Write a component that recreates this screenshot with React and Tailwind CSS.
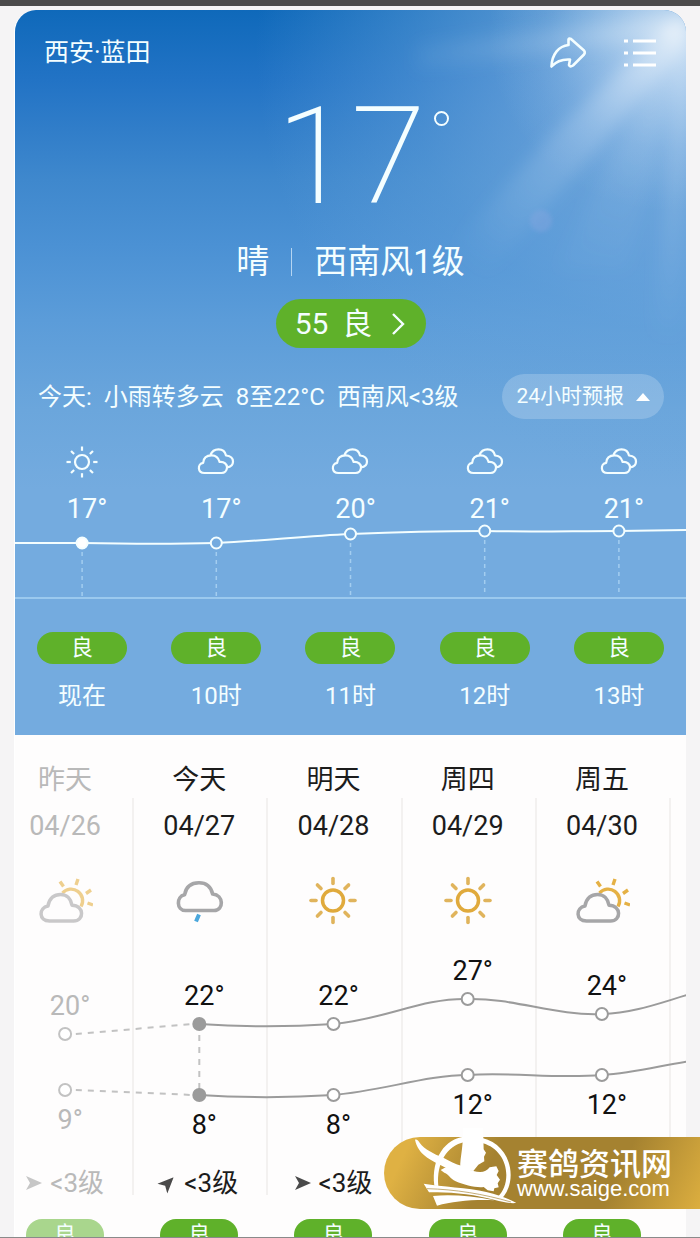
import React, { useState } from "react";

const hours = [
  { time: "现在", temp: 17, icon: "sunny", air: "良", y: 18 },
  { time: "10时", temp: 17, icon: "cloudy", air: "良", y: 18 },
  { time: "11时", temp: 20, icon: "cloudy", air: "良", y: 9 },
  { time: "12时", temp: 21, icon: "cloudy", air: "良", y: 6 },
  { time: "13时", temp: 21, icon: "cloudy", air: "良", y: 6 },
];

const days = [
  { name: "昨天", date: "04/26", icon: "partly", high: 20, low: 9, hy: 94, ly: 150, wind: "<3级", angle: 0, past: true },
  { name: "今天", date: "04/27", icon: "rain", high: 22, low: 8, hy: 84, ly: 155, wind: "<3级", angle: -45, today: true },
  { name: "明天", date: "04/28", icon: "sunny", high: 22, low: 8, hy: 84, ly: 155, wind: "<3级", angle: 0 },
  { name: "周四", date: "04/29", icon: "sunny", high: 27, low: 12, hy: 59, ly: 135 },
  { name: "周五", date: "04/30", icon: "partly", high: 24, low: 12, hy: 74, ly: 135 },
];

const rays = [0, 45, 90, 135, 180, 225, 270, 315];

const HourIcon = ({ name }) => {
  if (name === "sunny") {
    return (
      <svg className="h-8 w-10" viewBox="0 0 40 32" fill="none" stroke="#f4feff" strokeWidth="2.2">
        <circle cx="20" cy="16" r="7" />
        {rays.map((a) => (
          <path key={a} d="M20 4.8V0.5" transform={`rotate(${a} 20 16)`} />
        ))}
      </svg>
    );
  }
  return (
    <svg className="h-8 w-10" viewBox="0 0 40 32" fill="none" stroke="#f4feff" strokeWidth="2.2" strokeLinejoin="round">
      <path d="M8.5 27C1.5 27 1 17.8 7.2 16.8C7.5 11.5 11 9.3 15.6 9.3C20 9.3 22.6 12 23.6 16C28.5 15.5 31 18.5 31 21.3C31 24.8 28.5 27 25.5 27Z" />
      <path d="M14.5 9C16 5 19 3.3 22.5 3.3C27 3.3 29.3 6 30 9.5C34.5 10 37 12.3 37 15.5C37 19 34.8 21 31 21.3" />
    </svg>
  );
};

const DayIcon = ({ name }) => {
  if (name === "sunny") {
    return (
      <svg className="h-14 w-14" viewBox="0 0 56 56" fill="none" stroke="#e0aa3c">
        <circle cx="28" cy="28.5" r="10.5" strokeWidth="3.5" />
        {rays.map((a) => (
          <path key={a} d="M28 11.5V6.5" stroke="#e0b45c" strokeWidth="3.6" strokeLinecap="round" transform={`rotate(${a} 28 28.5)`} />
        ))}
      </svg>
    );
  }
  if (name === "rain") {
    return (
      <svg className="h-14 w-14" viewBox="0 0 56 56" fill="none" stroke="#a6a6a8" strokeWidth="3.6" strokeLinejoin="round">
        <path d="M14.5 38.5C5.3 38.5 5 24.5 13.6 22.8C15 14.5 20.5 10.8 28 10.8C35.5 10.8 40 15 41.6 22C53 23 53 38.5 43 38.5Z" />
        <path d="M28 42.5L25 49.5" stroke="#4ba7dc" strokeWidth="4" />
      </svg>
    );
  }
  return (
    <svg className="h-14 w-14" viewBox="0 0 56 56" fill="none" strokeLinejoin="round">
      <g stroke="#e5b145" strokeWidth="3.4">
        <path d="M25.5 21A11.5 11.5 0 0 1 44 34.5" />
        <path d="M26.5 14.5L23 9.5M39 13L41 7M49 21.5L54 18M50.5 31L56 33" />
      </g>
      <path
        d="M12.5 49C1.5 49 1.5 35.8 11 34C12.3 26 17.5 22.4 23.5 22.4C30 22.4 34 27 35 33.2C47.5 33.5 47.5 49 36.5 49Z"
        stroke="#a6a6a8"
        strokeWidth="3.5"
      />
    </svg>
  );
};

const SunBeams = () => (
  <svg className="absolute right-0 top-0 h-[340px] w-[400px]" viewBox="0 0 400 340" aria-hidden="true">
    <defs>
      <radialGradient id="glow" gradientUnits="userSpaceOnUse" cx="382" cy="22" r="180">
        <stop offset="0" stopColor="#fff" stopOpacity="0.5" />
        <stop offset="0.3" stopColor="#f0f6fd" stopOpacity="0.32" />
        <stop offset="0.65" stopColor="#d5e6f7" stopOpacity="0.12" />
        <stop offset="1" stopColor="#d5e6f7" stopOpacity="0" />
      </radialGradient>
      <radialGradient id="beam" gradientUnits="userSpaceOnUse" cx="392" cy="14" r="320">
        <stop offset="0" stopColor="#fff" stopOpacity="0.6" />
        <stop offset="0.45" stopColor="#dcebfa" stopOpacity="0.3" />
        <stop offset="1" stopColor="#cfe3f7" stopOpacity="0" />
      </radialGradient>
      <filter id="soft" x="-20%" y="-20%" width="140%" height="140%">
        <feGaussianBlur stdDeviation="8" />
      </filter>
      <filter id="flare" x="-50%" y="-50%" width="200%" height="200%">
        <feGaussianBlur stdDeviation="2" />
      </filter>
    </defs>
    <rect width="400" height="340" fill="url(#glow)" />
    <g fill="url(#beam)" filter="url(#soft)">
      <path d="M400 4L130 34L130 60L400 26Z" opacity="0.5" />
      <path d="M396 4L270 120L110 300L170 300L310 140L402 30Z" opacity="0.75" />
      <path d="M396 10L270 260L340 260L402 20Z" opacity="0.25" />
      <path d="M396 12L366 330L396 330L404 12Z" opacity="0.55" />
    </g>
    <circle cx="255" cy="211" r="11" fill="#8fa9e2" opacity="0.35" filter="url(#flare)" />
  </svg>
);

const HourChart = () => (
  <svg className="h-[74px] w-full overflow-visible" aria-hidden="true">
    <svg width="100%" height="74" viewBox="0 0 500 74" preserveAspectRatio="none" fill="none">
      <path
        d="M0 18H50C90 19 120 19 150 18C185 16 215 11 250 9C285 7 315 6 350 6C385 7 415 6 450 6L500 5"
        stroke="#f4feff"
        strokeWidth="2"
        vectorEffect="non-scaling-stroke"
      />
    </svg>
    <line x1="0" x2="100%" y1="73" y2="73" stroke="#a8d3f3" strokeWidth="1.5" />
    {hours.map((h, i) => (
      <g key={h.time}>
        <line
          x1={`${i * 20 + 10}%`}
          x2={`${i * 20 + 10}%`}
          y1={h.y + 9}
          y2="71"
          stroke="#a3cdf0"
          strokeWidth="1.5"
          strokeDasharray="4 4"
        />
        <circle cx={`${i * 20 + 10}%`} cy={h.y} r="5.5" fill={i === 0 ? "#fff" : "#74abdf"} stroke="#f4feff" strokeWidth="2" />
      </g>
    ))}
  </svg>
);

const DayChart = () => (
  <svg className="pointer-events-none absolute inset-x-0 top-[142px] h-[220px] w-full overflow-visible">
    <svg
      className="overflow-visible"
      width="100%"
      height="220"
      viewBox="0 0 500 220"
      preserveAspectRatio="none"
      fill="none"
      stroke="#9b9b9b"
      strokeWidth="2"
    >
      <path d="M150 84C183 87 217 87 250 84C290 79 315 58 350 59C385 58 415 76 450 74C475 73 495 62 516 54" vectorEffect="non-scaling-stroke" />
      <path d="M150 155C185 158 215 158 250 155C285 151 320 135 350 135C385 132 415 139 450 135C475 133 495 125 516 121" vectorEffect="non-scaling-stroke" />
      <g stroke="#c2c2c2" strokeDasharray="6 6">
        <path d="M58 94L145 84" vectorEffect="non-scaling-stroke" />
        <path d="M58 150L145 155" vectorEffect="non-scaling-stroke" />
        <path d="M150 95V150" vectorEffect="non-scaling-stroke" />
      </g>
    </svg>
    {days.map((d, i) => {
      const x = `${i * 20 + 10}%`;
      const stroke = d.past ? "#c2c2c2" : "#9b9b9b";
      const fill = d.today ? "#9b9b9b" : "#fff";
      const color = d.past ? "#b9b9b9" : "#111";
      return (
        <g key={d.date} fontSize="27" textAnchor="middle">
          <circle cx={x} cy={d.hy} r="6" fill={fill} stroke={stroke} strokeWidth="2" />
          <circle cx={x} cy={d.ly} r="6" fill={fill} stroke={stroke} strokeWidth="2" />
          <text x={x} dx="5" y={d.hy - 19} fill={color}>{d.high}°</text>
          <text x={x} dx="5" y={d.ly + 39} fill={color}>{d.low}°</text>
        </g>
      );
    })}
  </svg>
);

const PigeonLogo = () => (
  <svg className="h-[72px] w-[103px] shrink-0 overflow-visible" viewBox="27 51 309 216" aria-hidden="true">
    <g fill="#fff">
      {/* ring */}
      <path d="M178 50C122 56 78 112 88 197L100 198C94 128 126 78 178 66Z" />
      <path d="M232 54C284 66 317 112 317 165C317 196 305 221 288 238L276 233C296 215 304 190 304 165C304 120 276 82 234 70Z" />
      {/* wings */}
      <path d="M30 59C36 57 40 62 44 68C58 88 88 102 112 112C134 124 152 134 170 137L180 160L150 158C138 154 128 146 112 138C74 118 40 104 30 59Z" />
      <path d="M174 24H234L236 88L243 98L237 110L238 124L220 134L205 153L168 150C160 130 176 90 174 24Z" />
      {/* body and tail */}
      <path d="M107 150L118 144C136 138 160 138 205 153C228 160 244 156 254 142L274 139L281 153L275 165L285 179L278 190L281 202L268 205L266 214L248 211L236 201C216 204 178 196 152 184C136 176 128 160 118 158Z" />
      {/* banner */}
      <path d="M56 191C110 201 190 202 244 216C284 226 316 238 334 249C314 251 292 246 270 240C206 222 130 214 72 217Z" />
      <path d="M84 228C140 223 200 228 268 241C206 238 144 244 96 257Z" />
    </g>
    <path d="M66 206C150 208 236 222 318 246" fill="none" stroke="#a68332" strokeWidth="2" />
  </svg>
);

export default function App() {
  const [showHours, setShowHours] = useState(true);

  return (
    <div className="relative flex h-screen flex-col overflow-hidden border-b border-[#8a8a8a] bg-[#f5f4f5] font-['Roboto','Noto_Sans_CJK_SC',sans-serif]">
      <div className="h-[6px] shrink-0 bg-[#4b4b4b]" />
      <main className="mx-[14px] mt-1 min-h-0 flex-1 overflow-hidden rounded-t-[22px] border-l border-white bg-[#fefdfd]">
        {/* Current weather */}
        <section className="relative bg-[radial-gradient(circle_at_100%_40px,#a9cdf0cc_0px,#83b3e299_150px,#6aa5dc66_280px,#6aa5dc00_430px),linear-gradient(#0f69ba_0px,#2273c5_70px,#3f88cd_170px,#4b91d4_235px,#5b9cd9_310px,#6ba6dc_400px,#74abdf_480px)] text-[#f4feff]">
          <SunBeams />
          <div className="relative pb-[23px] pt-[23px]">
            <header className="flex h-10 items-center justify-between pl-[29px] pr-7">
              <h1 className="text-[25px]">西安·蓝田</h1>
              <div className="flex items-center gap-9">
                <button type="button" aria-label="分享">
                  <svg className="h-9 w-9" viewBox="0 0 36 36" fill="none" stroke="#f4feff" strokeWidth="2.6" strokeLinejoin="round">
                    <path d="M1.5 31.5C2 19 9 11 18.5 10V4.5Q19 3 21 4L34 15.5Q35.5 17.5 34 19.5L23 30.5Q20 32.5 19 30L20 24.5C12 24 6 26.5 1.5 31.5Z" />
                  </svg>
                </button>
                <button type="button" aria-label="城市列表">
                  <svg className="h-9 w-9" viewBox="0 0 36 36" stroke="#fff" strokeWidth="3">
                    <path d="M2 6H6M11 6H34M2 18H6M11 18H34M2 30H6M11 30H34" />
                  </svg>
                </button>
              </div>
            </header>

            <div className="mt-4 flex justify-center pl-6 leading-[136px]">
              <span className="text-[136px] font-extralight">17</span>
              <span className="ml-2 mt-[22px] h-[15px] w-[15px] rounded-full border-2 border-[#f4feff]" />
            </div>

            <div className="mt-[17px] flex items-center justify-center text-[33px] leading-10">
              <span>晴</span>
              <span className="mx-[22px] h-7 w-px bg-[#b5d5f2]" />
              <span>西南风1级</span>
            </div>

            <div className="mt-[17px] flex justify-center">
              <button type="button" className="flex h-[49px] w-[150px] items-center justify-center gap-[14px] rounded-full bg-[#5fb12a] text-[30px] leading-none">
                <span>55</span>
                <span>良</span>
                <svg className="ml-1 h-6 w-4" viewBox="0 0 16 24" fill="none" stroke="#f4feff" strokeWidth="2.4">
                  <path d="M3 2L13 12L3 22" />
                </svg>
              </button>
            </div>

            <div className="mt-[26px] flex items-center justify-between pl-[23px] pr-[22px]">
              <p className="flex gap-3 whitespace-nowrap text-2xl">
                <span>今天:</span>
                <span>小雨转多云</span>
                <span>8至22°C</span>
                <span>西南风&lt;3级</span>
              </p>
              <button
                type="button"
                onClick={() => setShowHours(!showHours)}
                className="flex h-[45px] items-center gap-3 whitespace-nowrap rounded-full bg-white/20 px-[14px] text-[21px]"
              >
                24小时预报
                <svg className={showHours ? "h-2 w-[14px]" : "h-2 w-[14px] rotate-180"} viewBox="0 0 14 8" fill="#fff">
                  <path d="M7 0L14 8H0Z" />
                </svg>
              </button>
            </div>

            {showHours && (
              <div className="mt-[27px]">
                <div className="grid grid-cols-5">
                  {hours.map((h) => (
                    <div key={h.time} className="flex flex-col items-center">
                      <HourIcon name={h.icon} />
                      <span className="mt-[15px] pl-[10px] text-[27px] leading-8">{h.temp}°</span>
                    </div>
                  ))}
                </div>
                <HourChart />
                <div className="mt-[33px] grid grid-cols-5">
                  {hours.map((h) => (
                    <div key={h.time} className="flex flex-col items-center">
                      <span className="flex h-8 w-[90px] items-center justify-center rounded-full bg-[#5fb12a] text-[22px] leading-none">
                        {h.air}
                      </span>
                      <span className="mt-4 text-2xl leading-8">{h.time}</span>
                    </div>
                  ))}
                </div>
              </div>
            )}
          </div>
        </section>

        {/* Daily forecast, scrolled slightly to the left */}
        <section className="-ml-[17px] mr-[17px] pt-[27px] text-[27px] text-[#1c1c1c]">
          <div className="grid grid-cols-5 text-center leading-9">
            {days.map((d) => (
              <h2 key={d.date} className={d.past ? "text-[#b9b9b9]" : ""}>{d.name}</h2>
            ))}
          </div>
          <div className="relative">
            <div className="grid grid-cols-5">
              {days.map((d) => (
                <div
                  key={d.date}
                  className={`flex flex-col items-center pt-[10px] shadow-[2px_0_0_#f3f1f0] ${d.past ? "text-[#b9b9b9]" : ""}`}
                >
                  <span className="leading-9">{d.date}</span>
                  <div className={d.past ? "mt-7 opacity-60" : "mt-7"}>
                    <DayIcon name={d.icon} />
                  </div>
                  <div className="mt-[243px] flex h-6 items-center gap-2 text-[26px] leading-6">
                    {d.wind && (
                      <>
                        <svg
                          className="h-4 w-4"
                          viewBox="0 0 16 16"
                          fill={d.past ? "#c6c6c6" : "#4a4a4a"}
                          style={{ transform: `rotate(${d.angle}deg)` }}
                        >
                          <path d="M0 1L16 8L0 15L4 8Z" />
                        </svg>
                        <span>{d.wind}</span>
                      </>
                    )}
                  </div>
                </div>
              ))}
            </div>
            <DayChart />
          </div>
          <div className="mt-6 grid grid-cols-5">
            {days.map((d) => (
              <div key={d.date} className="flex justify-center">
                <span
                  className={`flex h-8 w-[78px] items-center justify-center rounded-full text-[22px] leading-none text-[#f4feff] ${
                    d.past ? "bg-[#a9d68d]" : "bg-[#5fb12a]"
                  }`}
                >
                  良
                </span>
              </div>
            ))}
          </div>
        </section>
      </main>

      <a
        href="#saige"
        className="absolute bottom-7 right-0 flex h-[72px] items-center rounded-l-full bg-[linear-gradient(115deg,#dfb143_8%,#a58230_34%,#a58230_72%,#dcae3f_100%)] pl-[30px] pr-7 text-white"
      >
        <PigeonLogo />
        <span className="flex flex-col whitespace-nowrap">
          <span className="text-[31px] font-medium leading-8">赛鸽资讯网</span>
          <span className="font-['Liberation_Sans',sans-serif] text-[22px] leading-4">www.saige.com</span>
        </span>
      </a>
    </div>
  );
}
